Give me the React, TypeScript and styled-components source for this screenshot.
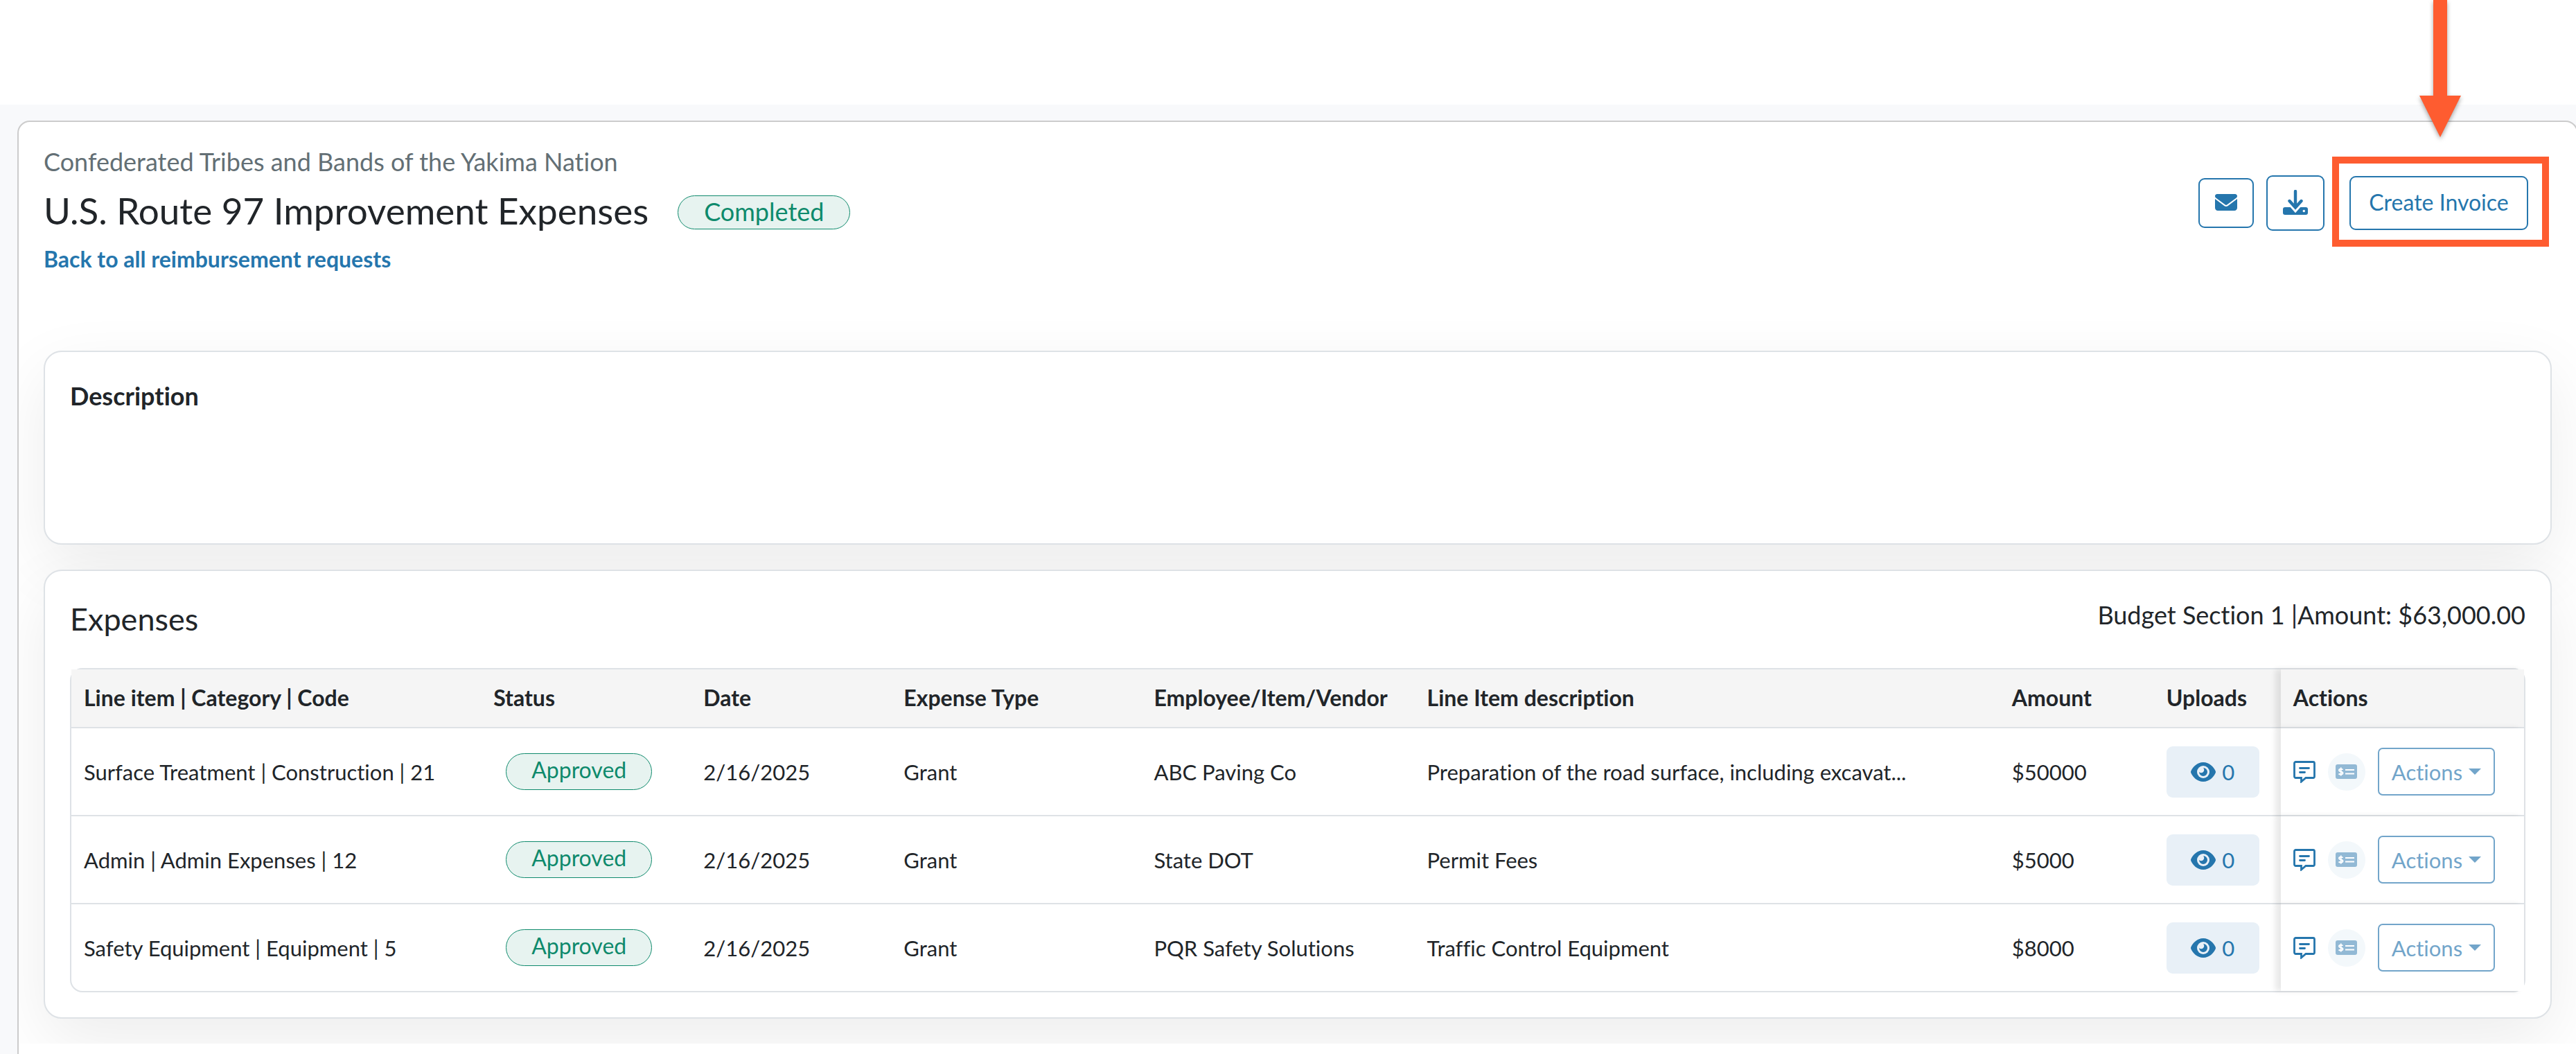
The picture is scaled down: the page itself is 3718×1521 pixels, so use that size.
import React from "react";
import styled, { createGlobalStyle } from "styled-components";
import { FaEnvelope } from "react-icons/fa6";

const Global = createGlobalStyle`
  * { box-sizing: border-box; }
  body { margin: 0; background: #fff; color: #212529; font-family: Lato, "Open Sans", sans-serif; font-size: 32px; line-height: 48px; font-variant-ligatures: no-common-ligatures; }
  h1, h2, h3, p { margin: 0; font-weight: 400; }
  button { font: inherit; font-variant-ligatures: inherit; cursor: pointer; }
`;

const blue = "#2576ad";
const line = "#dee2e6";

const TopBar = styled.header`
  height: 151px;
  background: #fff;
`;

const Page = styled.div`
  height: calc(100vh - 151px);
  padding: 23px 0 0 25px;
  overflow: hidden;
  background: #f8f9fb;
`;

const Panel = styled.main`
  height: calc(100% + 20px);
  margin-right: -3px;
  padding: 36px 36px 0;
  background: #fff;
  border: 2px solid #ccc;
  border-radius: 18px;
`;

const Head = styled.div`
  display: flex;
  justify-content: space-between;
  align-items: flex-start;
  height: 294px;
`;

const Org = styled.p`
  font-size: 36px;
  line-height: 42px;
  color: #636f75;
`;

const TitleRow = styled.div`
  display: flex;
  align-items: center;
  gap: 42px;
  margin: 18px 0 14px;
`;

const Title = styled.h1`
  font-size: 53px;
  line-height: 64px;
`;

const Pill = styled.span<{ $large?: boolean }>`
  display: inline-block;
  margin-top: ${(p) => (p.$large ? 4 : 0)}px;
  padding: ${(p) => (p.$large ? "0 37px 3px" : "0 36px 5px")};
  border: 1px solid #0e8a6c;
  border-radius: 27px;
  background: #e7f3f0;
  color: #0e8a6c;
  font-size: ${(p) => (p.$large ? 36 : 32)}px;
  line-height: ${(p) => (p.$large ? 44 : 46)}px;
`;

const Back = styled.a`
  color: ${blue};
  font-weight: 700;
  text-decoration: none;
`;

const Tools = styled.div`
  display: flex;
  align-items: center;
  gap: 18px;
  padding-top: 14px;
`;

const Outline = styled.button<{ $w: number; $h: number }>`
  display: flex;
  align-items: center;
  justify-content: center;
  width: ${(p) => p.$w}px;
  height: ${(p) => p.$h}px;
  padding: 0 0 2px;
  background: #fff;
  border: 2px solid ${blue};
  border-radius: 9px;
  color: ${blue};
`;

const Highlight = styled.div`
  display: flex;
  padding: 18px 20px 14px 15px;
  border: 10px solid #fe5c30;
  margin: 0 4px 4px -7px;
`;

const ArrowLayer = styled.div`
  position: absolute;
  top: 0;
  right: 166px;
  line-height: 0;
  pointer-events: none;
  filter: drop-shadow(0 3px 3px rgba(0, 0, 0, 0.35));
`;

const Sections = styled.div`
  display: flex;
  flex-direction: column;
  gap: 36px;
  margin: 0 -36px;
  padding: 0 36px 36px;
  clip-path: inset(-96px 0 0 0);
`;

const Card = styled.section<{ $min?: number }>`
  min-height: ${(p) => p.$min || 0}px;
  padding: 36px;
  border: 2px solid ${line};
  border-radius: 26px;
  background: #fff;
  box-shadow: 0 32px 96px rgba(0, 0, 0, 0.075);
`;

const CardTitle = styled.h2`
  font-size: 36px;
  line-height: 54px;
  font-weight: 700;
`;

const CardHead = styled.div`
  display: flex;
  justify-content: space-between;
  align-items: flex-start;
  height: 104px;
`;

const SectionTitle = styled.h2`
  font-size: 45px;
  line-height: 66px;
`;

const Budget = styled.p`
  font-size: 36px;
  line-height: 54px;
`;

const Frame = styled.div`
  border: 2px solid ${line};
  border-radius: 18px;
`;

const Table = styled.table`
  width: 100%;
  table-layout: fixed;
  border-collapse: separate;
  border-spacing: 0;
`;

const Th = styled.th`
  height: 85px;
  padding: 0 18px 2px;
  text-align: left;
  white-space: nowrap;
  background: #f5f5f5;
  border-bottom: 2px solid ${line};
  &:last-child { box-shadow: -8px 0 8px rgba(0, 0, 0, 0.09); }
`;

const Td = styled.td`
  height: 127px;
  padding: 0 18px;
  font-size: 31px;
  white-space: nowrap;
  border-bottom: 2px solid ${line};
  tr:last-child > & { height: 125px; border-bottom: 0; }
  &:last-child { background: #fff; box-shadow: -8px 0 8px rgba(0, 0, 0, 0.09); }
`;

const PillSlot = styled.div`
  display: flex;
  padding-left: 18px;
`;

const Upload = styled.button`
  display: flex;
  align-items: center;
  justify-content: center;
  gap: 9px;
  width: 134px;
  height: 74px;
  padding: 0;
  border: 0;
  border-radius: 9px;
  background: #e8f0f7;
  color: ${blue};
`;

const RowTools = styled.div`
  display: flex;
  align-items: center;
`;

const Ghost = styled.button`
  display: flex;
  padding: 0;
  border: 0;
  background: none;
  color: ${blue};
`;

const Round = styled.button`
  display: flex;
  align-items: center;
  justify-content: center;
  width: 54px;
  height: 54px;
  margin: 0 18px;
  padding: 0;
  border: 0;
  border-radius: 50%;
  background: #f3f8fb;
  color: #92b9d5;
`;

const Menu = styled.button`
  display: flex;
  align-items: center;
  gap: 9px;
  height: 69px;
  padding: 0 18px;
  border: 2px solid #72a5ca;
  border-radius: 7px;
  background: #fff;
  color: #72a5ca;
`;

const Caret = styled.span`
  border: 9px solid transparent;
  border-top-color: currentColor;
  border-bottom: 0;
`;

const Download = () => (
  <svg width="36" height="36" viewBox="0 0 36 36" fill="none">
    <rect y="25" width="36" height="11" rx="3" fill="currentColor" />
    <path d="M8 18l10 11.500L28 18" stroke="#fff" strokeWidth="5" />
    <path d="M18 2v22M9.500 16L18 25.500 26.500 16" stroke="currentColor" strokeWidth="4.400" strokeLinecap="round" />
    <circle cx="30.300" cy="30.500" r="1.700" fill="#fff" />
  </svg>
);

const Eye = () => (
  <svg width="36" height="28" viewBox="0 0 36 28">
    <path d="M18 0C9 0 3 7 0.600 12a4 4 0 0 0 0 4C3 21 9 28 18 28s15-7 17.400-12a4 4 0 0 0 0-4C33 7 27 0 18 0z" fill="currentColor" />
    <circle cx="18" cy="14" r="9" fill="#e8f0f7" />
    <path d="M18 8a6 6 0 1 1-6 6 4 4 0 0 0 6-6z" fill="currentColor" />
  </svg>
);

const Comment = () => (
  <svg width="32" height="32" viewBox="0 0 32 32" fill="none" stroke="currentColor">
    <path d="M3.500 1.500h25a2 2 0 0 1 2 2v19a2 2 0 0 1-2 2H18l-6.500 5.500v-5.500h-8a2 2 0 0 1-2-2v-19a2 2 0 0 1 2-2z" strokeWidth="2.800" />
    <path d="M9.500 10.500h13M9.500 16.500h7" strokeWidth="2.800" strokeLinecap="round" />
  </svg>
);

const Check = () => (
  <svg width="31" height="21" viewBox="0 0 31 21">
    <rect width="31" height="21" rx="3" fill="currentColor" />
    <path d="M14 8h13M14 13.500h13" stroke="#fff" strokeWidth="1.800" />
    <path d="M10.500 7.800C9.500 6.400 5 6 5 8.500s5.500 1.500 5.500 4-4.500 2.500-6 1M7.700 4.500v12" stroke="#fff" strokeWidth="1.900" fill="none" />
  </svg>
);

const columns: [string, number][] = [
  ["Line item | Category | Code", 591],
  ["Status", 303],
  ["Date", 289],
  ["Expense Type", 361],
  ["Employee/Item/Vendor", 394],
  ["Line Item description", 844],
  ["Amount", 223],
  ["Uploads", 183],
  ["Actions", 351],
];
const total = columns.reduce((sum, c) => sum + c[1], 0);

const rows = [
  ["Surface Treatment | Construction | 21", "ABC Paving Co", "Preparation of the road surface, including excavat...", "$50000"],
  ["Admin | Admin Expenses | 12", "State DOT", "Permit Fees", "$5000"],
  ["Safety Equipment | Equipment | 5", "PQR Safety Solutions", "Traffic Control Equipment", "$8000"],
];

export default function App() {
  return (
    <>
      <Global />
      <TopBar />
      <Page>
        <Panel>
          <Head>
            <div>
              <Org>Confederated Tribes and Bands of the Yakima Nation</Org>
              <TitleRow>
                <Title>U.S. Route 97 Improvement Expenses</Title>
                <Pill $large>Completed</Pill>
              </TitleRow>
              <Back href="#requests">Back to all reimbursement requests</Back>
            </div>
            <Tools>
              <Outline $w={80} $h={72} aria-label="Email"><FaEnvelope size={32} /></Outline>
              <Outline $w={84} $h={80} aria-label="Download"><Download /></Outline>
              <Highlight>
                <Outline $w={258} $h={78}>Create Invoice</Outline>
              </Highlight>
            </Tools>
          </Head>
          <Sections>
            <Card $min={280}>
              <CardTitle>Description</CardTitle>
            </Card>
            <Card>
              <CardHead>
                <SectionTitle>Expenses</SectionTitle>
                <Budget>Budget Section 1 |Amount: $63,000.00</Budget>
              </CardHead>
              <Frame>
                <Table>
                  <colgroup>
                    {columns.map(([name, w]) => (
                      <col key={name} style={{ width: `${(w / total) * 100}%` }} />
                    ))}
                  </colgroup>
                  <thead>
                    <tr>{columns.map(([name]) => <Th key={name} scope="col">{name}</Th>)}</tr>
                  </thead>
                  <tbody>
                    {rows.map(([item, vendor, description, amount]) => (
                      <tr key={item}>
                        <Td>{item}</Td>
                        <Td><PillSlot><Pill>Approved</Pill></PillSlot></Td>
                        <Td>2/16/2025</Td>
                        <Td>Grant</Td>
                        <Td>{vendor}</Td>
                        <Td>{description}</Td>
                        <Td>{amount}</Td>
                        <Td><Upload><Eye />0</Upload></Td>
                        <Td>
                          <RowTools>
                            <Ghost aria-label="Comments"><Comment /></Ghost>
                            <Round aria-label="Payment"><Check /></Round>
                            <Menu>Actions<Caret /></Menu>
                          </RowTools>
                        </Td>
                      </tr>
                    ))}
                  </tbody>
                </Table>
              </Frame>
            </Card>
          </Sections>
        </Panel>
      </Page>
      <ArrowLayer>
        <svg width="60" height="198" viewBox="0 0 60 198">
          <path d="M20 0h20v138h20L30 198 0 138h20z" fill="#fe5c30" />
        </svg>
      </ArrowLayer>
    </>
  );
}
